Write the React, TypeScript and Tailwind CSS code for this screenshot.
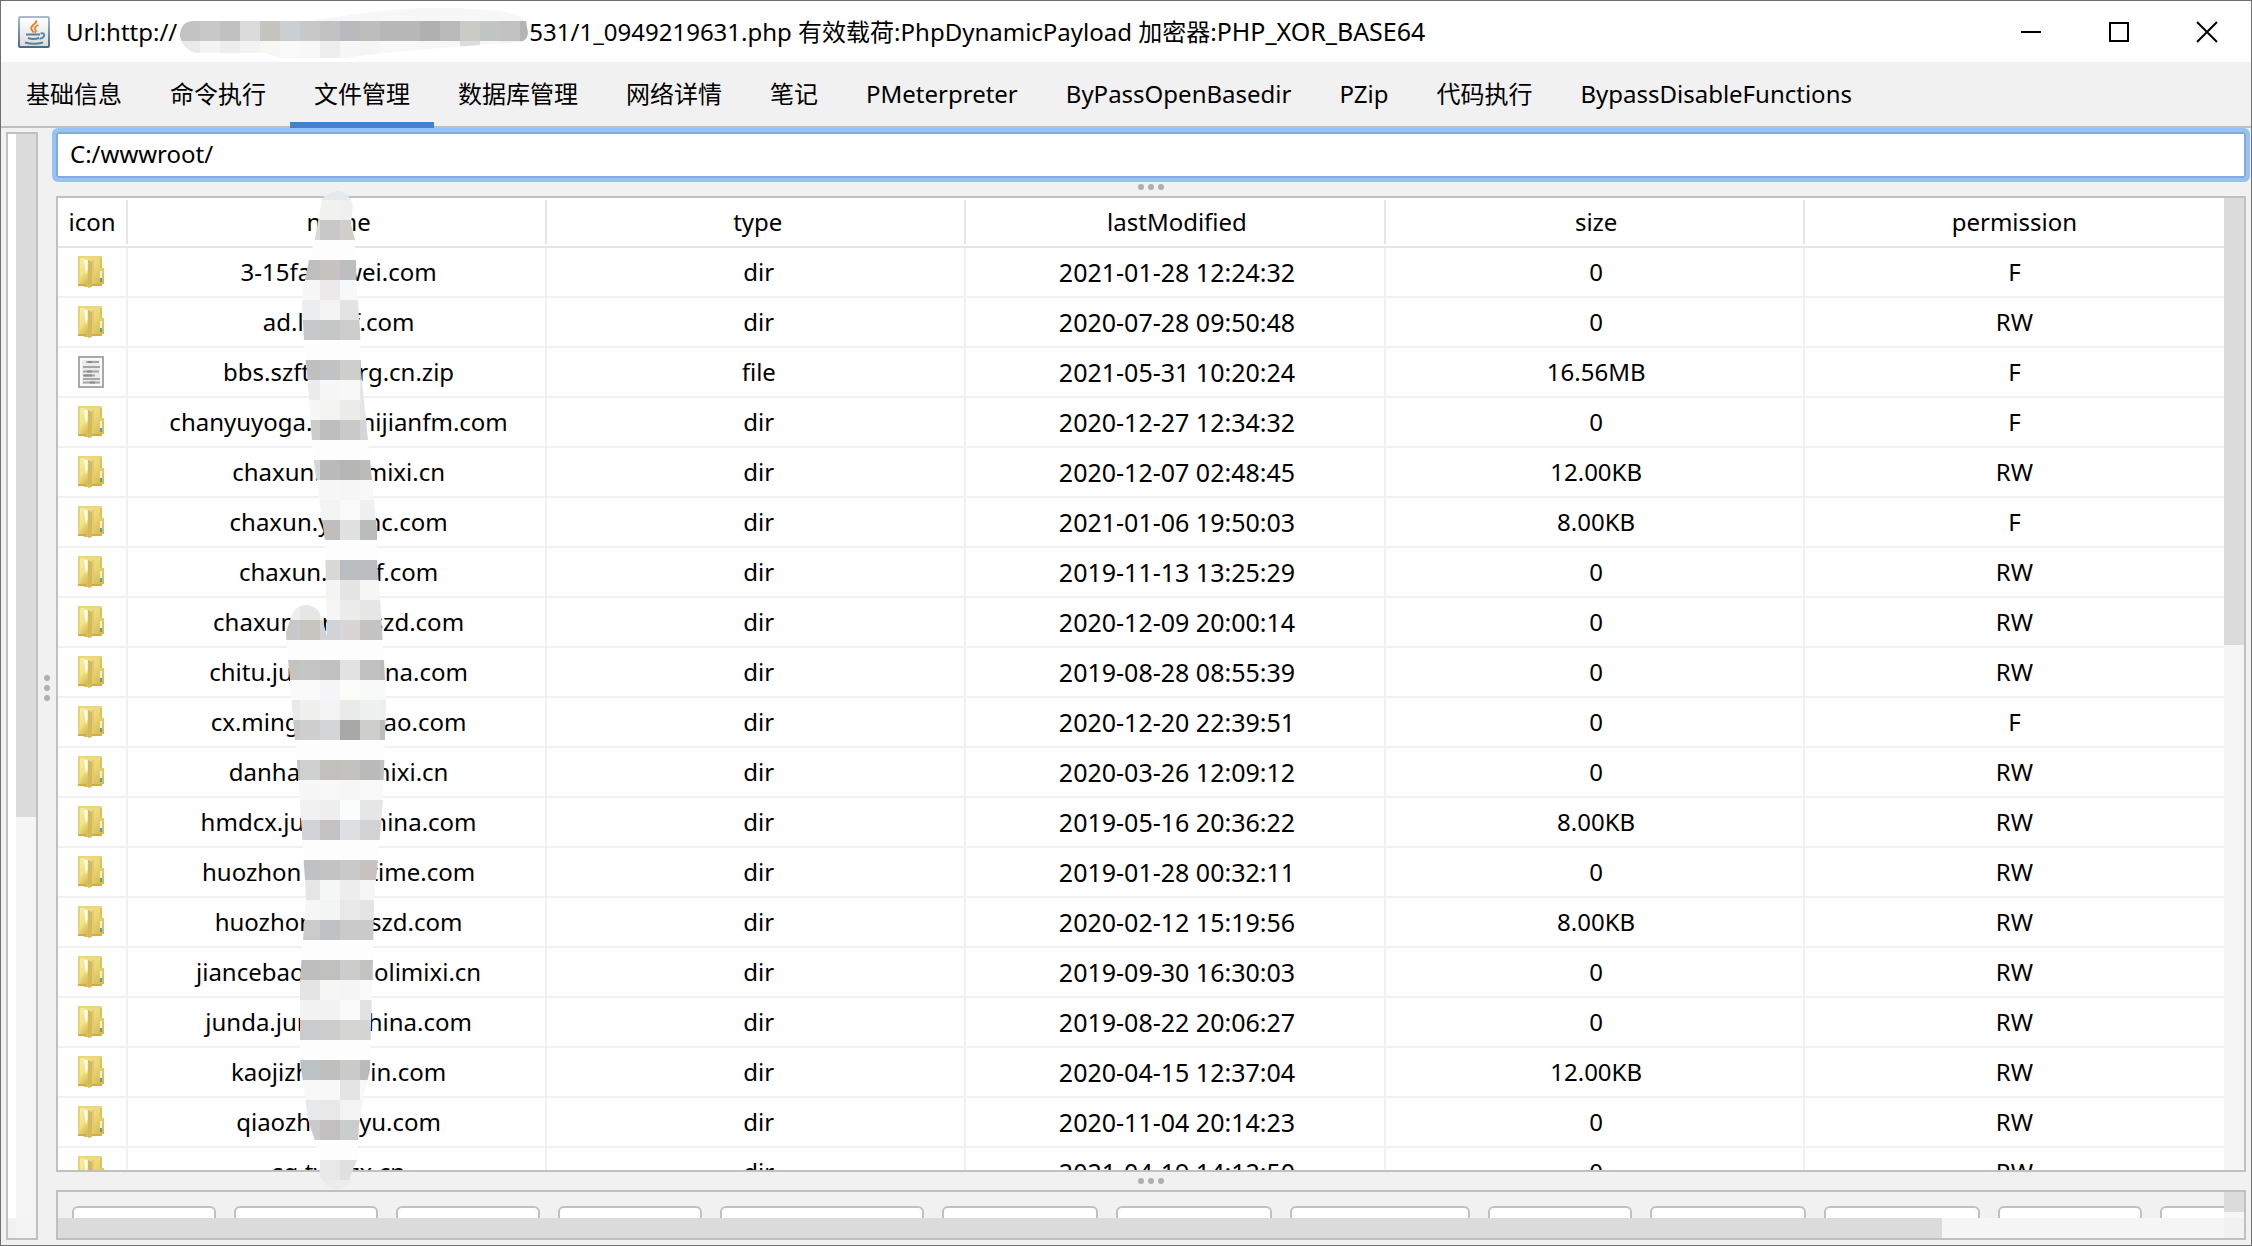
import React from 'react';

type Entry = {
  name: [string, string, string, string?, string?];
  file?: boolean;
  date: string;
  size: string;
  perm: string;
};

const entries: Entry[] = [
  { name: ['3-15fa', 'w-8', 'wei.com'], date: '2021-01-28 12:24:32', size: '0', perm: 'F' },
  { name: ['ad.l', 'w-12', 'f.com'], date: '2020-07-28 09:50:48', size: '0', perm: 'RW' },
  { name: ['bbs.szft', 'w-12', 'rg.cn.zip'], file: true, date: '2021-05-31 10:20:24', size: '16.56MB', perm: 'F' },
  { name: ['chanyuyoga.', 'w-12', 'hijianfm.com'], date: '2020-12-27 12:34:32', size: '0', perm: 'F' },
  { name: ['chaxun.', 'w-11', 'mixi.cn'], date: '2020-12-07 02:48:45', size: '12.00KB', perm: 'RW' },
  { name: ['chaxun.y', 'w-9', 'nc.com'], date: '2021-01-06 19:50:03', size: '8.00KB', perm: 'F' },
  { name: ['chaxun.', 'w-12', 'f.com'], date: '2019-11-13 13:25:29', size: '0', perm: 'RW' },
  { name: ['chaxun.', 'w-5', 'r', 'w-10', 'szd.com'], date: '2020-12-09 20:00:14', size: '0', perm: 'RW' },
  { name: ['chitu.ju', 'w-23', 'na.com'], date: '2019-08-28 08:55:39', size: '0', perm: 'RW' },
  { name: ['cx.ming', 'w-21', 'ao.com'], date: '2020-12-20 22:39:51', size: '0', perm: 'F' },
  { name: ['danha', 'w-17', 'mixi.cn'], date: '2020-03-26 12:09:12', size: '0', perm: 'RW' },
  { name: ['hmdcx.ju', 'w-17', 'hina.com'], date: '2019-05-16 20:36:22', size: '8.00KB', perm: 'RW' },
  { name: ['huozhon', 'w-17', 'time.com'], date: '2019-01-28 00:32:11', size: '0', perm: 'RW' },
  { name: ['huozhon', 'w-14', 'szd.com'], date: '2020-02-12 15:19:56', size: '8.00KB', perm: 'RW' },
  { name: ['jiancebao', 'w-14', 'aolimixi.cn'], date: '2019-09-30 16:30:03', size: '0', perm: 'RW' },
  { name: ['junda.jun', 'w-14', 'hina.com'], date: '2019-08-22 20:06:27', size: '0', perm: 'RW' },
  { name: ['kaojizh', 'w-15', 'in.com'], date: '2020-04-15 12:37:04', size: '12.00KB', perm: 'RW' },
  { name: ['qiaozh', 'w-12', 'yu.com'], date: '2020-11-04 20:14:23', size: '0', perm: 'RW' },
  { name: ['sg.tw', 'w-4', 'zx.cn'], date: '2021-04-19 14:12:50', size: '0', perm: 'RW' },
];

const tabs = [
  '基础信息',
  '命令执行',
  '文件管理',
  '数据库管理',
  '网络详情',
  '笔记',
  'PMeterpreter',
  'ByPassOpenBasedir',
  'PZip',
  '代码执行',
  'BypassDisableFunctions',
];

const actions = [
  '上传',
  '移动',
  '刷新',
  '下载',
  '复制绝对路径',
  '复制文件',
  '新建文件',
  '新建文件夹',
  '编辑',
  '删除文件',
  '文件属性',
  '执行',
  '远程下载',
];

function JavaIcon() {
  return (
    <svg viewBox="0 0 32 32" className="h-8 w-8 shrink-0" aria-hidden="true">
      <defs>
        <linearGradient id="jframe" x1="0" y1="0" x2="0" y2="1">
          <stop offset="0" stopColor="#a9bccd" />
          <stop offset="1" stopColor="#49687f" />
        </linearGradient>
        <linearGradient id="jbg" x1="0" y1="0" x2="0" y2="1">
          <stop offset="0" stopColor="#ffffff" />
          <stop offset="1" stopColor="#dcdcdc" />
        </linearGradient>
      </defs>
      <rect x="0" y="0" width="32" height="32" rx="2" fill="url(#jframe)" />
      <rect x="2" y="2" width="28" height="28" fill="url(#jbg)" />
      <path d="M18 4.500c1.800 3-5.200 4.600-4.800 7.800.2 1.800 2 2.800 2.600 4.400" fill="none" stroke="#e8832a" strokeWidth="2" />
      <path d="M20.500 9c-3.500 1.500-4.500 3-3 4.800.8 1.200.3 2.200-.8 3" fill="none" stroke="#e8832a" strokeWidth="1.800" />
      <path d="M8 18.500h14M10 22c3 1 8 1 11 0" fill="none" stroke="#5382a1" strokeWidth="2" />
      <path d="M22.500 17.500c5-1.500 5.500 4-1 5.300" fill="none" stroke="#5382a1" strokeWidth="1.800" />
      <path d="M7 26.500c5 1.500 13 1.500 18 0" fill="none" stroke="#5382a1" strokeWidth="2" />
    </svg>
  );
}

function FolderIcon() {
  return (
    <svg viewBox="0 0 26 32" className="mx-auto h-8 w-[26px]" role="img" aria-label="dir">
      <defs>
        <linearGradient id="fback" x1="0" y1="0" x2="1" y2="1">
          <stop offset="0" stopColor="#f3e48e" />
          <stop offset="0.5" stopColor="#ecd779" />
          <stop offset="1" stopColor="#d6b441" />
        </linearGradient>
        <linearGradient id="ffront" x1="0" y1="0" x2="0.4" y2="1">
          <stop offset="0" stopColor="#f6eea8" />
          <stop offset="0.6" stopColor="#f3e48b" />
          <stop offset="1" stopColor="#d9bf5a" />
        </linearGradient>
      </defs>
      <path d="M0 0h24v12h2v16h-2v2H0z" fill="url(#fback)" />
      <path d="M0 0h24v2H0z" fill="#ead67d" />
      <path d="M22 2h2v10h-2z" fill="#dcc25c" />
      <path d="M0 2l6 0 4 3v26H7l-5-2H0z" fill="url(#ffront)" />
      <path d="M6 4h3.500v10L8 18z" fill="#fffdf0" />
      <path d="M10 4l4 2v25l-4 1z" fill="#d3b95c" />
      <path d="M14 4h2v25h-2z" fill="#e2cb6d" />
      <path d="M0 0h2v28H0z" fill="#e8d272" />
      <path d="M0 28h8v2H0zM14 28h10v2H14z" fill="#cfae45" />
      <path d="M22 15h2v7h-2z" fill="#f4f1e4" />
      <path d="M22 22h2v4h-2z" fill="#43a5cf" />
    </svg>
  );
}

function FileIcon() {
  return (
    <svg viewBox="0 0 26 32" className="mx-auto h-8 w-[26px]" role="img" aria-label="file">
      <rect x="1" y="1" width="24" height="30" fill="#fbfbfb" stroke="#a9a9a9" strokeWidth="2" />
      <rect x="4" y="4" width="18" height="24" fill="#ececec" />
      <path d="M8 6h13M5 11h17M5 15.500h16M5 19.500h12M5 23h17M5 26.500h17" stroke="#a6a6a6" strokeWidth="2" />
      <path d="M10 6h4M9 15.500h5M6 19.500h8M12 26.500h5" stroke="#8a8a8a" strokeWidth="2" />
    </svg>
  );
}

const CELL = 20;

type MosaicRow = [number, number, string[]];

function Mosaic({ rows, width }: { rows: MosaicRow[]; width: number }) {
  return (
    <g shapeRendering="crispEdges">
      {rows.map(([x, y, colours]) =>
        colours.map((c, i) => (
          <rect
            key={`${x}-${y}-${i}`}
            x={x + i * CELL}
            y={y}
            width={colours.length === 1 ? width : CELL}
            height={CELL}
            fill={c}
          />
        )),
      )}
    </g>
  );
}

const titleRows: MosaicRow[] = [
  [180, 0, ['#f7f7f7']],
  [180, 20, ['#c3c3c3', '#c8c8c8', '#c0c0be', '#dbdbdb', '#c5c4be', '#cacfd1', '#c7c9c9', '#c2c2c2', '#b9babd', '#bdbdbd', '#b7b7b7', '#b7b7b7', '#b2b0af', '#bababa', '#cacac6', '#c1c6c5', '#c0c3c1', '#b3b4b4']],
  [180, 40, ['#eaeaea', '#f4f4f4', '#ededed', '#f3f3f3', '#f7f7f4', '#fafafa', '#f8f8f6', '#eeeeee', '#f7f7f8', '#f5f5f4', '#f8f8f6', '#f8f8f8', '#f6f6f6', '#f7f7f7', '#dcdcde', '#f8f8f7', '#f4f4f4', '#e8e8e8']],
];

const nameRows: MosaicRow[] = [
  [280, 180, ['#e4e9ed']],
  [280, 200, ['#f3f3f3', '#f3f3f3', '#f1f1f0', '#f0f0f0']],
  [280, 220, ['#d9d9d9', '#d9d9d9', '#c8c8c8', '#d0cfca']],
  [280, 240, ['#fdfdfd']],
  [280, 260, ['#bfbfbf', '#bfbfbf', '#c7c4c0', '#bcbec0']],
  [280, 280, ['#f7f7f7', '#f7f7f7', '#ebe9ea', '#f6f8f9']],
  [280, 300, ['#ebedef', '#ebedef', '#f3f3f3', '#e3e3e3']],
  [280, 320, ['#c5c7c9', '#c5c7c9', '#c5c7c6', '#cdcdcd', '#cdcdcd']],
  [280, 340, ['#fdfdfd']],
  [280, 360, ['#bfbfbf', '#bfbfbf', '#c1c2c4', '#cfcfcc', '#bbbbbb']],
  [280, 380, ['#ececec', '#ececec', '#f7f7f7', '#f8f8f8', '#e6e6e6']],
  [280, 400, ['#f7f7f7', '#f7f7f7', '#f3f3f1', '#ececeb', '#e4e5e7']],
  [280, 420, ['#cbcbc9', '#cbcbc9', '#bebebe', '#c9c9c9', '#d3d5d8']],
  [280, 440, ['#fdfdfd']],
  [280, 460, ['#d4d6d8', '#d4d6d8', '#bababa', '#b6b6b6', '#bbbbba']],
  [280, 480, ['#f8f8f8', '#f8f8f8', '#f7f7f8', '#f6f6f6', '#f8f8f8']],
  [280, 500, ['#f3f3f3', '#f3f3f3', '#f4f4f4', '#fafafa', '#f0f0f0']],
  [280, 520, ['#bebebc', '#bebebc', '#bebebc', '#e0e1e3', '#babbbb']],
  [280, 540, ['#fdfdfd']],
  [280, 560, ['#d9d8d7', '#d9d8d7', '#d9d8d7', '#bbbdc0', '#bbbcbd']],
  [280, 580, ['#f4f4f2', '#f4f4f2', '#f4f4f2', '#e5e5e5', '#f6f6f6', '#f6f6f6']],
  [280, 600, ['#eeeeee', '#e6e6e6', '#f6f6f4', '#ececec', '#e6e6e4', '#e6e6e4']],
  [280, 620, ['#c8c8c8', '#c6c5c0', '#d2d3d6', '#d7d6d5', '#c4c4c4', '#c4c4c4']],
  [280, 640, ['#fdfdfd']],
  [280, 660, ['#c3c3c3', '#c5c5c5', '#c0c0c0', '#e2e2e2', '#c0c1c0', '#bbbbbb']],
  [280, 680, ['#fafafa', '#fafafa', '#f5f5f7', '#fcfcf8', '#f8faf9', '#f8faf9']],
  [280, 700, ['#e9e9e9', '#f0f0ee', '#f3f3f3', '#eaeaea', '#eff0f0', '#eeeeee']],
  [280, 720, ['#c8cacc', '#cfcfd0', '#d3d5d7', '#a8a8a8', '#cececc', '#bfbdbb']],
  [280, 740, ['#fdfdfd']],
  [280, 760, ['#c0c0c0', '#cfd1d0', '#c2c0bc', '#c4c2bf', '#b8bbba', '#c0c0c0']],
  [280, 780, ['#f7f7f7', '#f7f7f7', '#f8f8f8', '#f6f6f6', '#f9f9f9', '#f9f9f9']],
  [280, 800, ['#f1f1f1', '#f1f1f1', '#eeeeef', '#fbfdfd', '#e6e6e6', '#e6e6e6']],
  [280, 820, ['#d1d3d6', '#d1d3d6', '#c4c2c3', '#dddfe2', '#d2d2d3', '#d2d2d3']],
  [280, 840, ['#fdfdfd']],
  [280, 860, ['#bfc1c5', '#bfc1c5', '#c3c3c3', '#c9c9c9', '#c8c3c0']],
  [280, 880, ['#e6e6e7', '#e6e6e7', '#f6f8f8', '#ededee', '#f6f6f6']],
  [280, 900, ['#f6f6f6', '#f6f6f6', '#f3f5f4', '#e8e8e8', '#e4e4e4']],
  [280, 920, ['#cbcbcb', '#cbcbcb', '#bfc1c5', '#cbc9ca', '#cacaca']],
  [280, 940, ['#fdfdfd']],
  [280, 960, ['#bdbebd', '#bdbebd', '#c0c0be', '#cbcccb', '#c3c3c1']],
  [280, 980, ['#e4e4e4', '#e4e4e4', '#f6f6f4', '#f5f5f5', '#fafafa']],
  [280, 1000, ['#f2f2f2', '#f2f2f2', '#f2f2f2', '#fafafa', '#e2e2e2']],
  [280, 1020, ['#cacbcd', '#cacbcd', '#cdcdcd', '#d5d5d3', '#d4d4d4']],
  [280, 1040, ['#fdfdfd']],
  [280, 1060, ['#bcc1c4', '#bcc1c4', '#bfbfbe', '#cacac8', '#b8babb']],
  [280, 1080, ['#f8f8f8', '#f8f8f8', '#f8f8f8', '#e4e4e4', '#f8faf9']],
  [280, 1100, ['#e8e9eb', '#e8e9eb', '#e8e8e8', '#f3f3f4', '#f4f5f5']],
  [280, 1120, ['#cacaca', '#cacaca', '#c1bfc0', '#cbcdcd', '#cbcdcd']],
  [280, 1140, ['#fdfdfd']],
  [280, 1160, ['#e8e8e6', '#e8e8e6', '#e8e8e6', '#dfe1e0', '#dfe1e0']],
  [280, 1180, ['#ececec']],
];

function TitleMask() {
  return (
    <svg viewBox="180 0 350 60" className="absolute top-0 left-[114px] h-[60px] w-[350px]" aria-hidden="true">
      <clipPath id="titleClip">
        <path d="M180 32Q182 20 194 20H310Q345 14 400 8Q440 5 490 9Q520 12 526 20L528 32Q527 40 520 41L440 47L375 53L345 57H280L265 52H196Q183 48 180 36z" />
      </clipPath>
      <g clipPath="url(#titleClip)">
        <Mosaic rows={titleRows} width={360} />
      </g>
    </svg>
  );
}

function NameMask() {
  return (
    <svg viewBox="280 190 120 1002" className="pointer-events-none absolute -top-2 left-[222px] h-[1002px] w-[120px]" aria-hidden="true">
      <clipPath id="nameClip">
        <path d="M337 191Q325 193 322 200L315 238L309 260L303 290L302 305L304 340L308 385L313 455L320 505L325 540L326 590L327 636L322 618Q318 606 307 605Q296 605 292 614L286 632L287 650L291 690L293 720L297 760L301 820L305 880L306 900L303 940L300 980V1060L304 1090L308 1120L314 1138L320 1160V1176Q326 1189 337 1190Q348 1188 351 1175L357 1160L359 1125L364 1095L370 1070L371 1025L373 960L374 900L378 860L383 800L385 740L386 700L384 660L380 600L377 560V530L372 480L366 420L361 370L360 330L357 290L355 240L351 224L353 205Q349 192 337 191z" />
      </clipPath>
      <g clipPath="url(#nameClip)">
        <Mosaic rows={nameRows} width={120} />
      </g>
    </svg>
  );
}

function Dots({ vertical }: { vertical?: boolean }) {
  return (
    <span className={vertical ? 'flex flex-col gap-1' : 'flex gap-1'} aria-hidden="true">
      <i className="h-1.5 w-1.5 rounded-full bg-[#afafaf]" />
      <i className="h-1.5 w-1.5 rounded-full bg-[#afafaf]" />
      <i className="h-1.5 w-1.5 rounded-full bg-[#afafaf]" />
    </span>
  );
}

function NameText({ parts }: { parts: Entry['name'] }) {
  return (
    <>
      {parts[0]}
      <span className={`inline-block ${parts[1]}`} />
      {parts[2]}
      {parts[3] && <span className={`inline-block ${parts[3]}`} />}
      {parts[4]}
    </>
  );
}

export default function App() {
  return (
    <div className="flex h-screen flex-col overflow-hidden border border-[#707070] bg-[#f1f1f1] font-['Noto_Sans','Noto_Sans_CJK_SC',sans-serif] text-2xl leading-8 text-black">
      <header className="flex h-[61px] shrink-0 items-center bg-white pl-[17px]">
        <JavaIcon />
        <h1 className="relative ml-4 flex h-full flex-1 items-center whitespace-pre">
          Url:http://<span className="inline-block w-[352px]" />
          <span>
            531/1_0949219631.php 有效载荷:PhpDynamicPayload 加密器:
            <span className="text-[25px]">PHP_XOR_BASE64</span>
          </span>
          <TitleMask />
        </h1>
        <div className="flex h-full">
          <button aria-label="Minimize" className="flex w-22 items-center justify-center">
            <span className="h-0.5 w-5 bg-black" />
          </button>
          <button aria-label="Maximize" className="flex w-22 items-center justify-center">
            <span className="h-5 w-5 border-2 border-black" />
          </button>
          <button aria-label="Close" className="flex w-22 items-center justify-center">
            <svg viewBox="0 0 22 22" className="h-[22px] w-[22px]">
              <path d="M1 1l20 20M21 1L1 21" stroke="#000" strokeWidth="2" />
            </svg>
          </button>
        </div>
      </header>

      <nav role="tablist" className="flex h-[66px] shrink-0 border-b-2 border-[#c0c0c0] pl-px">
        {tabs.map((t) => (
          <button
            key={t}
            role="tab"
            aria-selected={t === '文件管理'}
            className={
              t === '文件管理'
                ? '-mb-0.5 border-b-6 border-[#4083c9] px-6 pt-1 whitespace-nowrap'
                : 'mb-1 px-6 pt-1 whitespace-nowrap'
            }
          >
            {t}
          </button>
        ))}
      </nav>

      <div className="flex min-h-0 flex-1 pr-px pb-1 pl-[5px]">
        <aside className="mt-1 mb-px flex w-8 shrink-0 flex-col border-2 border-[#c0c0c0]">
          <div className="flex min-h-0 flex-1">
            <div className="w-2 bg-white" />
            <div className="flex-1 bg-[#f5f5f5]">
              <div className="h-[63%] bg-[#dbdbdb]" />
            </div>
          </div>
          <div className="flex h-5">
            <div className="w-2 bg-[#f1f1f1]" />
            <div className="flex-1 bg-[#f4f4f4]" />
          </div>
        </aside>
        <div className="flex w-[14px] shrink-0 items-center justify-center pt-1.5 pl-1">
          <Dots vertical />
        </div>

        <main className="flex min-w-0 flex-1 flex-col">
          <input
            aria-label="Path"
            defaultValue="C:/wwwroot/"
            className="h-[54px] w-full shrink-0 rounded-md border-4 border-[#97c3f3] bg-white px-3.5 pb-1 leading-8 outline-2 -outline-offset-6 outline-[#83abdb]"
          />
          <div className="flex h-[14px] shrink-0 items-start justify-center pt-0.5">
            <Dots />
          </div>

          <div className="relative mr-1 ml-1 flex min-h-0 flex-1 border-2 border-[#c0c0c0] bg-white">
            <div className="min-w-0 flex-1 overflow-hidden">
              <table className="w-full table-fixed border-separate border-spacing-0 text-center">
                <thead>
                  <tr className="h-[50px]">
                    {['icon', 'name', 'type', 'lastModified', 'size', 'permission'].map((h, i) => (
                      <th
                        key={h}
                        className={
                          i === 0
                            ? 'w-[70px] border-b-2 border-[#e5e5e5] p-0 font-normal'
                            : 'border-b-2 border-[#e5e5e5] p-0 font-normal'
                        }
                      >
                        <div
                          className={
                            i === 5
                              ? 'flex h-11 items-center justify-center'
                              : i === 0
                                ? 'flex h-11 items-center justify-center border-r-2 border-[#e5e5e5]'
                                : 'flex h-11 items-center justify-center border-r-2 border-[#e5e5e5] pl-1'
                          }
                        >
                          {h}
                        </div>
                      </th>
                    ))}
                  </tr>
                </thead>
                <tbody>
                  {entries.map((e) => (
                    <tr key={e.date} className="h-[50px] *:border-b-2 *:border-[#f1f1f1] *:py-0 *:whitespace-nowrap">
                      <td className="border-r-2 pr-0.5 pl-0">{e.file ? <FileIcon /> : <FolderIcon />}</td>
                      <td className="border-r-2 pr-0 pl-1">
                        <NameText parts={e.name} />
                      </td>
                      <td className="border-r-2 pr-0 pl-1.5">{e.file ? 'file' : 'dir'}</td>
                      <td className="border-r-2 pr-0 pl-1 text-[25px]">{e.date}</td>
                      <td className="border-r-2 pr-0 pl-1">{e.size}</td>
                      <td className="px-0">{e.perm}</td>
                    </tr>
                  ))}
                </tbody>
              </table>
            </div>
            <div className="w-5 shrink-0 bg-[#f5f5f5]">
              <div className="h-[46%] bg-[#dbdbdb]" />
            </div>
            <NameMask />
          </div>

          <div className="flex h-[18px] shrink-0 items-center justify-center">
            <Dots />
          </div>

          <div className="mr-1 mb-px ml-1 flex h-[50px] shrink-0 flex-col border-2 border-[#c0c0c0]">
            <div className="flex h-[26px]">
              <div className="flex min-w-0 flex-1 gap-[18px] overflow-hidden pt-[14px] pl-[14px]">
                {actions.map((a) => (
                  <button
                    key={a}
                    className="h-12 min-w-36 shrink-0 rounded-md border-2 border-[#c0c0c0] bg-white px-7 leading-8"
                  >
                    {a}
                  </button>
                ))}
              </div>
              <div className="w-5 shrink-0 bg-[#f5f5f5]">
                <div className="h-5 bg-[#dbdbdb]" />
              </div>
            </div>
            <div className="flex h-5">
              <div className="flex-1 bg-[#f5f5f5]">
                <div className="h-full w-[87%] bg-[#dbdbdb]" />
              </div>
              <div className="w-5 bg-[#f1f1f1]" />
            </div>
          </div>
        </main>
      </div>
    </div>
  );
}
